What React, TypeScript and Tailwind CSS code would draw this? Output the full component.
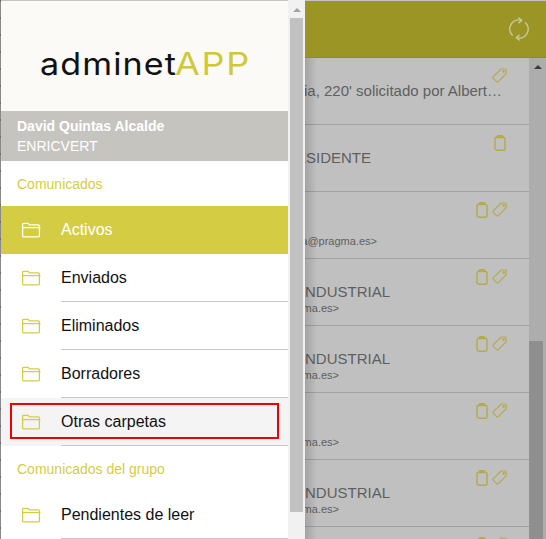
const FolderIcon = ({ className }: { className: string }) => (
  <svg width="20" height="16" viewBox="0 0 20 16" fill="none" stroke="currentColor" strokeWidth="1.3" className={className}>
    <path d="M1.6 14.2V2.2q0-.9.9-.9h4.6l1.3 1.6h8.8q1.2 0 1.2 1.1v9.9q0 1-1.1 1H2.6q-1 0-1-.8z" strokeLinejoin="round" />
    <path d="M1.6 5.6h17.8" />
  </svg>
);

const ClipIcon = () => (
  <svg width="12" height="16" viewBox="0 0 12 16" fill="none" stroke="#b3ab4a" strokeWidth="1.4">
    <rect x="1" y="2.2" width="10" height="13" rx="2" />
    <path d="M3.2 1.6q0-.9 1-.9h3.6q1 0 1 .9v.9H3.200z" />
  </svg>
);

const TagIcon = () => (
  <svg width="15" height="15" viewBox="0 0 15 15" fill="none" stroke="#b3ab4a" strokeWidth="1.2">
    <path d="M9.200 1H13.300q.8 0 .8.800V5.800L6.100 13.900q-.6.600-1.200 0L1.100 10.100q-.6-.6 0-1.200z" strokeLinejoin="round" />
    <circle cx="11.600" cy="3.500" r=".7" />
  </svg>
);

const SyncIcon = () => (
  <svg width="22" height="24" viewBox="0 0 22 24" fill="none" stroke="#c9c8a0" strokeWidth="1.5" strokeLinecap="round" strokeLinejoin="round">
    <path d="M13.500 3.400A9 9 0 0 0 4.200 18.100" />
    <path d="M8.500 20.600A9 9 0 0 0 17.800 5.900" />
    <path d="M10.800 1l2.800 2.400-2.800 2.400" />
    <path d="M11.200 18.200l-2.800 2.400 2.800 2.400" />
  </svg>
);

const folders = ["Enviados", "Eliminados", "Borradores"];

const rows = [
  { clip: false, tag: true, title: "Garantia, 220' solicitado por Albert…", titleW: "w-[197px]", mail: "", mailW: "w-[72px]" },
  { clip: true, tag: false, title: "PRESIDENTE", titleW: "w-[66px]", mail: "", mailW: "w-[72px]" },
  { clip: true, tag: true, title: "", titleW: "", mail: "maria@pragma.es>", mailW: "w-[72px]" },
  { clip: true, tag: true, title: "EMPRESA INDUSTRIAL", titleW: "w-[85px]", mail: "info@pragma.es>", mailW: "w-[34px]" },
  { clip: true, tag: true, title: "EMPRESA INDUSTRIAL", titleW: "w-[85px]", mail: "info@pragma.es>", mailW: "w-[34px]" },
  { clip: true, tag: true, title: "", titleW: "", mail: "info@pragma.es>", mailW: "w-[34px]" },
  { clip: true, tag: true, title: "EMPRESA INDUSTRIAL", titleW: "w-[85px]", mail: "info@pragma.es>", mailW: "w-[34px]" },
  { clip: true, tag: true, title: "", titleW: "", mail: "", mailW: "w-[34px]" },
];

export default function App() {
  return (
    <div className="flex h-[539px] w-[546px] overflow-hidden bg-white font-['Liberation_Sans',Arial,sans-serif]">
      <div className="w-px shrink-0 bg-[repeating-linear-gradient(180deg,#6e6a5c_0px,#6e6a5c_2px,#8a8a8a_2px,#8a8a8a_17px)]" />
      <div className="flex h-full w-[287px] shrink-0 flex-col">
        <div className="flex h-[111px] shrink-0 items-center border-t border-[#c4c4c4] bg-[#fbfaf6] pl-[39px]">
          <div className="mt-[15px] flex items-baseline text-[31px] leading-none text-[#111] font-['Inter',sans-serif]">
            <span className="inline-block w-[135px] origin-left scale-x-[1.1] tracking-[1px]">adminet</span>
            <span className="inline-block w-[73px] origin-left scale-x-[1.16] tracking-[1.5px] text-[#cfc93a]">APP</span>
          </div>
        </div>
        <div className="flex h-[50px] shrink-0 flex-col justify-center bg-[#c6c4bf] pl-4 text-sm leading-5 text-white">
          <div className="font-bold">David Quintas Alcalde</div>
          <div>ENRICVERT</div>
        </div>
        <div className="flex h-[45px] shrink-0 items-center pl-4 text-sm text-[#d4cd44]">Comunicados</div>
        <div className="flex h-12 shrink-0 items-center bg-[#d4cd44] text-white">
          <FolderIcon className="ml-[20px] mr-[20px] shrink-0 text-white" />
          <span className="text-base">Activos</span>
        </div>
        {folders.map((f) => (
          <div key={f} className="flex h-12 shrink-0 items-center">
            <FolderIcon className="ml-[20px] mr-[20px] shrink-0 text-[#d4cd44]" />
            <span className="flex h-12 flex-1 items-center border-b border-[#c8c8c8] text-base text-[#111]">{f}</span>
          </div>
        ))}
        <div className="relative flex h-12 shrink-0 items-center bg-[#f4f4f4]">
          <FolderIcon className="ml-[20px] mr-[20px] shrink-0 text-[#d4cd44]" />
          <span className="flex h-12 flex-1 items-center border-b border-[#c8c8c8] text-base text-[#111]">Otras carpetas</span>
          <div className="absolute left-[9px] top-[5px] h-9 w-[269px] border-2 border-[#f00000]" />
        </div>
        <div className="flex h-[45px] shrink-0 items-center pl-4 text-sm text-[#d4cd44]">Comunicados del grupo</div>
        <div className="flex h-12 shrink-0 items-center">
          <FolderIcon className="ml-[20px] mr-[20px] shrink-0 text-[#d4cd44]" />
          <span className="flex h-12 flex-1 items-center border-b border-[#c8c8c8] text-base text-[#111]">Pendientes de leer</span>
        </div>
      </div>
      <div className="flex h-full w-[17px] shrink-0 flex-col items-center bg-[#f1f1f1]">
        <div className="flex h-[18px] w-full shrink-0 items-center justify-center pt-0.5">
          <div className="h-0 w-0 border-x-[4px] border-b-[4px] border-x-transparent border-b-[#a3a3a3]" />
        </div>
        <div className="h-[494px] w-[13px] shrink-0 bg-[#c1c1c1]" />
      </div>
      <div className="relative flex h-full min-w-0 flex-1 flex-col overflow-hidden bg-[#c0c0c0]">
        <div className="flex h-[58px] shrink-0 items-center justify-end border-t border-[#c4c4c4] border-b border-b-[#85846a] bg-[#9a9524] pr-4">
          <SyncIcon />
        </div>
        <div className="flex min-h-0 flex-1">
          <div className="min-w-0 flex-1">
            {rows.map((r, i) => (
              <div key={i} className="flex h-[67px] shrink-0 flex-col border-b border-[#a0a0a0] pt-[10px]">
                <div className={`flex h-[15px] shrink-0 items-start justify-end gap-[4px] ${r.tag ? "pr-[22px]" : "pr-[23px]"}`}>
                  {r.clip && <ClipIcon />}
                  {r.tag && <TagIcon />}
                </div>
                <div className={`flex h-4 shrink-0 items-center justify-end overflow-hidden whitespace-nowrap text-[15px] text-[#5f5f5f] ${r.titleW}`}>
                  {r.title}
                </div>
                <div className={`flex h-4 shrink-0 items-center justify-end overflow-hidden whitespace-nowrap text-[11px] text-[#5f5f5f] ${r.mailW}`}>
                  {r.mail}
                </div>
              </div>
            ))}
          </div>
          <div className="flex w-[17px] shrink-0 flex-col bg-[#adadad]">
            <div className="flex h-[18px] shrink-0 items-center justify-center">
              <div className="h-0 w-0 border-x-[4px] border-b-[4px] border-x-transparent border-b-[#3c3c3c]" />
            </div>
            <div className="mt-[265px] h-[200px] w-[14px] shrink-0 bg-[#8f8f8f]" />
          </div>
        </div>
        <div className="absolute inset-y-0 left-0 top-[58px] w-3 bg-gradient-to-r from-black/15 to-transparent" />
      </div>
    </div>
  );
}
